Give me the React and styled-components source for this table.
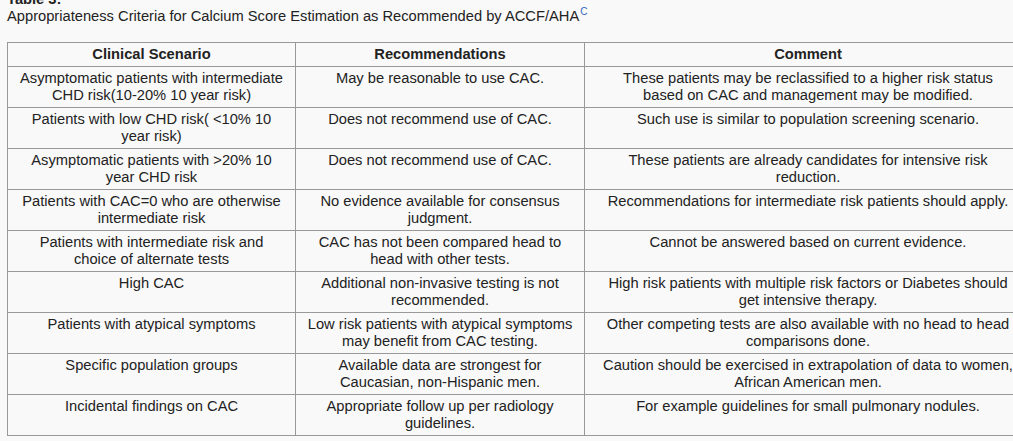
import React from 'react';
import styled, { createGlobalStyle } from 'styled-components';

const GlobalStyle = createGlobalStyle`
    html, body {
        margin: 0;
        padding: 0;
        background: #f9f9f9;
        overflow: hidden;
    }
`;

const Page = styled.div`
    padding: 0 7px;
    font-family: "Liberation Sans", Arial, sans-serif;
    font-size: 14.7px;
    line-height: 17px;
    color: #222;
    width: 1040px;
`;

const TableLabel = styled.div`
    font-weight: 700;
    margin-top: -9px;
`;

const Caption = styled.div`
    margin-top: 0;
`;

const Sup = styled.sup`
    color: #3366bb;
    font-size: 10px;
    line-height: 0;
    vertical-align: 6px;
    margin-left: 1px;
`;

const Table = styled.table`
    margin-top: 17px;
    border-collapse: collapse;
    width: 1024px;
    table-layout: fixed;
    background: #f9f9f9;
`;

const Col = styled.col`
    width: ${p => p.$w}px;
`;

const Th = styled.th`
    border: 1px solid #999;
    padding: 3px 5px;
    font-weight: 700;
    text-align: center;
    vertical-align: top;
`;

const Td = styled.td`
    border: 1px solid #999;
    padding: 3px 2px;
    text-align: center;
    vertical-align: top;
    height: 34px;
    white-space: nowrap;
`;

const Line = styled.span`
    display: block;
`;

const rows = [
    [['Asymptomatic patients with intermediate', 'CHD risk(10-20% 10 year risk)'], ['May be reasonable to use CAC.'], ['These patients may be reclassified to a higher risk status', 'based on CAC and management may be modified.']],
    [['Patients with low CHD risk( <10% 10', 'year risk)'], ['Does not recommend use of CAC.'], ['Such use is similar to population screening scenario.']],
    [['Asymptomatic patients with >20% 10', 'year CHD risk'], ['Does not recommend use of CAC.'], ['These patients are already candidates for intensive risk', 'reduction.']],
    [['Patients with CAC=0 who are otherwise', 'intermediate risk'], ['No evidence available for consensus', 'judgment.'], ['Recommendations for intermediate risk patients should apply.']],
    [['Patients with intermediate risk and', 'choice of alternate tests'], ['CAC has not been compared head to', 'head with other tests.'], ['Cannot be answered based on current evidence.']],
    [['High CAC'], ['Additional non-invasive testing is not', 'recommended.'], ['High risk patients with multiple risk factors or Diabetes should', 'get intensive therapy.']],
    [['Patients with atypical symptoms'], ['Low risk patients with atypical symptoms', 'may benefit from CAC testing.'], ['Other competing tests are also available with no head to head', 'comparisons done.']],
    [['Specific population groups'], ['Available data are strongest for', 'Caucasian, non-Hispanic men.'], ['Caution should be exercised in extrapolation of data to women,', 'African American men.']],
    [['Incidental findings on CAC'], ['Appropriate follow up per radiology', 'guidelines.'], ['For example guidelines for small pulmonary nodules.']],
];

const App = () => (
    <>
        <GlobalStyle />
        <Page>
            <TableLabel>Table 3:</TableLabel>
            <Caption>
                Appropriateness Criteria for Calcium Score Estimation as Recommended by ACCF/AHA<Sup>C</Sup>
            </Caption>
            <Table>
                <colgroup>
                    <Col $w={288} />
                    <Col $w={289} />
                    <Col $w={447} />
                </colgroup>
                <thead>
                    <tr>
                        <Th>Clinical Scenario</Th>
                        <Th>Recommendations</Th>
                        <Th>Comment</Th>
                    </tr>
                </thead>
                <tbody>
                    {rows.map((r, i) => (
                        <tr key={i}>
                            {r.map((cell, j) => (
                                <Td key={j}>
                                    {cell.map((l, k) => <Line key={k}>{l}</Line>)}
                                </Td>
                            ))}
                        </tr>
                    ))}
                </tbody>
            </Table>
        </Page>
    </>
);

export default App;
